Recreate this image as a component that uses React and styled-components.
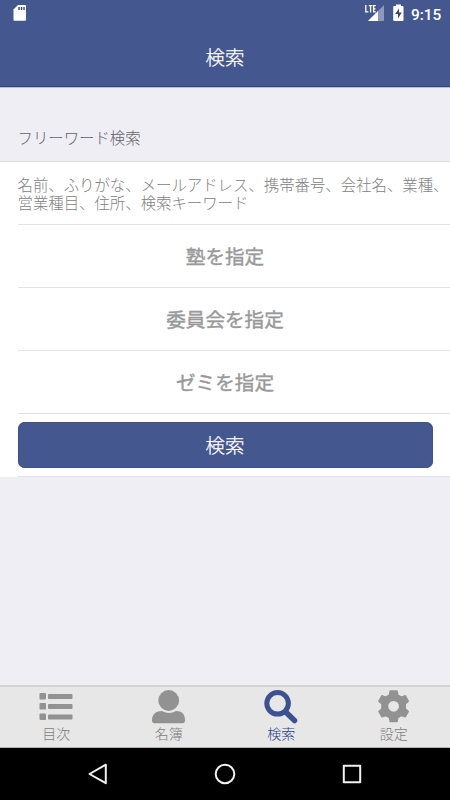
import React from "react";
import styled, { createGlobalStyle } from "styled-components";

const Global = createGlobalStyle`
  * { box-sizing: border-box; }
  body { margin: 0; background: #efeef4; }
`;

const Screen = styled.div`
  width: 450px;
  height: 800px;
  display: flex;
  flex-direction: column;
  overflow: hidden;
  background: #efeef4;
  font-family: "Noto Sans CJK JP", sans-serif;
  font-weight: 300;
`;

const Header = styled.header`
  height: 88px;
  background: #45578f;
  border-bottom: 1px solid #b4bfdc;
  box-shadow: inset 0 -1px #294783;
`;

const StatusBar = styled.div`
  height: 28px;
  display: flex;
  align-items: flex-start;
  padding: 4px 9px 0 13px;
  svg { display: block; }
`;

const SignalIcon = styled.svg`
  margin-left: auto;
`;

const BatteryIcon = styled.svg`
  margin-left: 8px;
`;

const Clock = styled.time`
  margin-left: 7px;
  width: 30px;
  font: 500 15.4px/22px Roboto, sans-serif;
  color: #fff;
  white-space: nowrap;
`;

const Title = styled.h1`
  margin: 0;
  height: 59px;
  font-size: 19.4px;
  font-weight: 300;
  line-height: 57px;
  text-align: center;
  color: #fff;
  -webkit-text-stroke: 0.25px #fff;
`;

const Main = styled.main`
  flex: 1;
`;

const SectionTitle = styled.h2`
  margin: 0;
  height: 74px;
  padding: 37px 18px 0 17.5px;
  border-bottom: 1px solid #dddde2;
  font-size: 15.4px;
  font-weight: 300;
  line-height: 24px;
  color: #626268;
`;

const Row = styled.div`
  height: 63px;
  display: flex;
  align-items: center;
  justify-content: center;
  background: linear-gradient(#e3e3e5, #e3e3e5) 18px 62px / 432px 1px no-repeat #fff;
`;

const Placeholder = styled.div`
  flex: 1;
  padding: 0 0 1px 17.5px;
  font-size: 15.4px;
  line-height: 18px;
  color: #828282;
  white-space: nowrap;
`;

const PlaceholderLine = styled.div`
  height: 18px;
`;

const Choice = styled.button`
  border: 0;
  padding: 0 0 1px;
  background: none;
  font: 400 19.6px/28px "Noto Sans CJK JP", sans-serif;
  -webkit-text-stroke: 0.4px #999;
  color: #999;
`;

const SearchButton = styled.button`
  width: 415px;
  height: 46px;
  margin-top: -1px;
  padding: 0;
  border: 0;
  border-radius: 7px;
  background: #45578f;
  box-shadow: inset 0 0 0 1px #3f528c;
  font: 300 19.4px/46px "Noto Sans CJK JP", sans-serif;
  color: #fff;
  -webkit-text-stroke: 0.25px #fff;
`;

const TabBar = styled.nav`
  height: 63px;
  display: grid;
  grid-template-columns: repeat(4, 1fr);
  border-top: 2px solid #d2d2d4;
  border-bottom: 1px solid #b4b4b4;
  background: #e7e7e7;
`;

const Tab = styled.a`
  display: flex;
  flex-direction: column;
  align-items: center;
  padding-top: 3px;
  color: ${(p) => (p.$active ? "#3c5192" : "#929292")};
  svg { display: block; }
`;

const TabLabel = styled.span`
  margin-top: -2px;
  font-size: 14px;
  line-height: 20px;
  color: ${(p) => (p.$active ? "#2b4289" : "#7c7c7c")};
`;

const SystemBar = styled.div`
  height: 52px;
  display: grid;
  grid-template-columns: repeat(3, 127px);
  justify-content: center;
  align-items: center;
  justify-items: center;
  background: #000;
`;

const SystemIcon = ({ children }) => (
  <svg width="24" height="24" viewBox="0 0 24 24" fill="none" stroke="#f2f2f2" strokeWidth="2" strokeLinejoin="round">
    {children}
  </svg>
);

const tabs = [
  {
    label: "目次",
    icon: (
      <>
        {[3.5, 13.5, 24].map((y) => (
          <g key={y}>
            <rect x="0.5" y={y - 0.5} width="6.5" height="6.5" rx="1" />
            <rect x="9" y={y + 0.5} width="24.5" height="5" rx="0.8" />
          </g>
        ))}
      </>
    ),
  },
  {
    label: "名簿",
    icon: (
      <>
        <circle cx="16.7" cy="10.5" r="10.4" />
        <path d="M10 21Q17 25 24 21C31 21 33 25 33 30.5Q33 33.3 30.5 33.3H2.5Q0 33.3 0 30.5C0 25 3 21 10 21Z" />
      </>
    ),
  },
  {
    label: "検索",
    active: true,
    icon: (
      <>
        <circle cx="13.6" cy="13.3" r="10.8" fill="none" stroke="currentColor" strokeWidth="5" />
        <path d="M22 22.2L30.5 30.5" stroke="currentColor" strokeWidth="5.5" strokeLinecap="round" />
      </>
    ),
  },
  {
    label: "設定",
    icon: (
      <path
        fillRule="evenodd"
        stroke="currentColor"
        strokeWidth="1.4"
        strokeLinejoin="round"
        transform="translate(-.4 -.7)"
        d="M13.6 1.7H20.4L21.2 5.7L25 7.8L28.6 6.4L31.7 11.9L28.7 14.6V19.4L31.7 22.2L28.6 27.6L25 26.2L21.2 28.3L20.4 32.3H13.6L12.8 28.3L9 26.2L5.4 27.6L2.3 22.2L5.3 19.4V14.6L2.3 11.9L5.4 6.4L9 7.8L12.8 5.7ZM17 10.9A6.1 6.1 0 1 0 17 23.1A6.1 6.1 0 1 0 17 10.9Z"
      />
    ),
  },
];

export default function App() {
  return (
    <Screen>
      <Global />
      <Header>
        <StatusBar>
          <svg width="14" height="18" viewBox="0 0 14 18">
            <path d="M5 1H12.2Q13 1 13 1.8V16Q13 16.8 12.2 16.8H1.3Q.5 16.8 .5 16V5.5Z" fill="#fff" />
            <path d="M6 3V6M8.5 3V6M11 3V6" stroke="#33427a" strokeWidth="1.4" />
          </svg>
          <SignalIcon width="20" height="18" viewBox="0 0 20 18">
            <path d="M19 1V17H3Z" fill="#8c99bd" />
            <path d="M13 7V17H3Z" fill="#fff" />
            <path d="M0 0H11.5V8.5H0Z" fill="#45578f" />
            <path d="M.8 1V7.8H3.4M3.8 1.7H7.4M5.6 1.7V8.4M10.8 1.7H8.6V7.8H10.8M8.6 4.8H10.5" fill="none" stroke="#fff" strokeWidth="1.3" />
          </SignalIcon>
          <BatteryIcon width="11" height="18" viewBox="0 0 11 18">
            <path d="M3 .5H8V2H9.5Q10.5 2 10.5 3V16Q10.5 17 9.5 17H1.2Q.2 17 .2 16V3Q.2 2 1.2 2H3Z" fill="#fff" />
            <path d="M6 4.5L2.2 10H5V14.5L8.8 8.5H6Z" fill="#33427a" />
          </BatteryIcon>
          <Clock>9:15</Clock>
        </StatusBar>
        <Title>検索</Title>
      </Header>
      <Main>
        <SectionTitle>フリーワード検索</SectionTitle>
        <Row>
          <Placeholder>
            <PlaceholderLine>名前、ふりがな、メールアドレス、携帯番号、会社名、業種、</PlaceholderLine>
            <PlaceholderLine>営業種目、住所、検索キーワード</PlaceholderLine>
          </Placeholder>
        </Row>
        {["塾を指定", "委員会を指定", "ゼミを指定"].map((label) => (
          <Row key={label}>
            <Choice>{label}</Choice>
          </Row>
        ))}
        <Row>
          <SearchButton>検索</SearchButton>
        </Row>
      </Main>
      <TabBar>
        {tabs.map(({ label, icon, active }) => (
          <Tab key={label} $active={active}>
            <svg width="34" height="35" viewBox="0 0 34 35" fill="currentColor">{icon}</svg>
            <TabLabel $active={active}>{label}</TabLabel>
          </Tab>
        ))}
      </TabBar>
      <SystemBar>
        <SystemIcon><path d="M19.8 2.7V21.2L3.5 12Z" /></SystemIcon>
        <SystemIcon><circle cx="12" cy="12" r="9.3" /></SystemIcon>
        <SystemIcon><rect x="3.8" y="3.8" width="16.4" height="16.4" /></SystemIcon>
      </SystemBar>
    </Screen>
  );
}
